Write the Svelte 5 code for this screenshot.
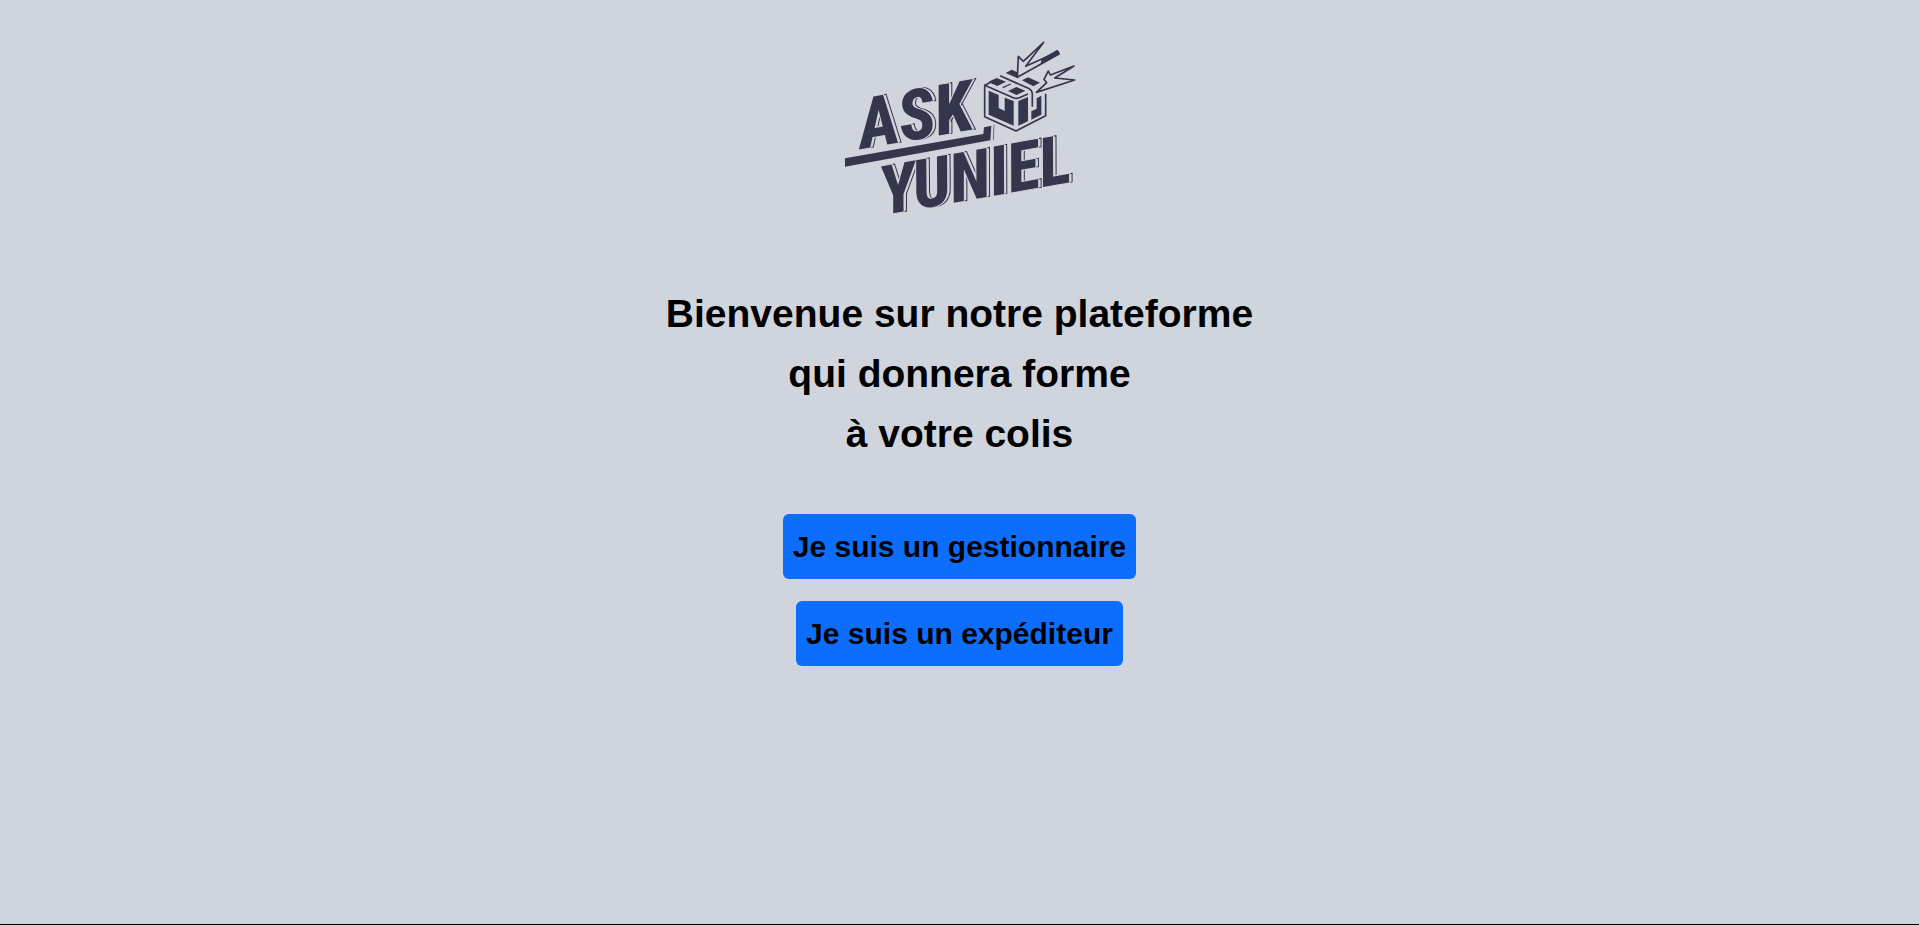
<script>
  const ink = '#34364b';
  const words = [
    { text: 'ASK', x: 112, y: 124, size: 70 },
    { text: 'YUNIEL', x: 134, y: 190, size: 68 }
  ];
  const title = ['Bienvenue sur notre plateforme', 'qui donnera forme', 'à votre colis'];
  const roles = ['Je suis un gestionnaire', 'Je suis un expéditeur'];
</script>

<main>
  <svg class="logo" viewBox="0 0 420 240" role="img" aria-label="Ask Yuniel">
    {#each words as w}
      <g transform="translate({w.x} {w.y}) rotate(-10)" font-size={w.size}>
        <text class="echo" x="3">{w.text}</text>
        <text class="word">{w.text}</text>
      </g>
    {/each}
    <g transform="translate(70 -5) scale(.33333)" fill={ink}>
      <path d="M75 415 490 342 492 322 514 317 511 361 75 440Z" />
      <path d="M522 315 520 360" stroke={ink} stroke-width="2" />
    </g>
    <g transform="translate(220 5) scale(.33333)" fill={ink} stroke-linejoin="round">
      <g fill="none" stroke={ink} stroke-width="5">
        <path d="M60 158 44 166V260L138 303 227 257V191" />
        <path d="M44 166 130 203Q139 207 148 203L174 192" />
        <path d="M90 137 175 175Q187 180 187 194V230" />
      </g>
      <path d="M56 182 86 195V234L104 243V203L131 213V287L56 254Z" />
      <path d="M145 213 174 201V274L145 287Z" />
      <path d="M214 197V254L184 269V244L200 236V205Z" />
      <path d="M54 156 80 144 108 155 82 168Z" />
      <path d="M114 183 139 171 166 182 140 195Z" />
      <path d="M107 129 125 119 142 127 143 145Z" />
      <path d="M156 151 174 142 210 158 190 169Z" />
      <path d="M98 173 122 162" stroke={ink} stroke-width="4" />
      <g fill="#d0d4dc" stroke={ink} stroke-width="5">
        <path d="M142 142 145 79 160 94 221 37 167 109 264 65 267 72Z" />
        <path d="M199 187 230 158 222 148 235 123 241 135 312 108 254 144 314 150Z" />
      </g>
      <path d="M215 86 262 59 270 72 212 102Z" />
    </g>
  </svg>

  <h1>
    {#each title as line}<span>{line}</span>{/each}
  </h1>

  <div class="actions">
    {#each roles as role}<button type="button">{role}</button>{/each}
  </div>
</main>

<style>
  :global(body) {
    margin: 0;
    background: #d0d4dc;
  }
  main {
    box-sizing: border-box;
    min-height: 100vh;
    padding: 25px 16px;
    border-bottom: 1px solid #000;
    display: flex;
    flex-direction: column;
    align-items: center;
    font-family: 'Liberation Sans', Arial, sans-serif;
    color: #000;
  }
  .logo {
    width: 420px;
    max-width: 100%;
  }
  .logo text {
    font-family: 'Roboto Condensed', 'Liberation Sans Narrow', 'Roboto', sans-serif;
    font-weight: 800;
    font-style: italic;
  }
  .echo {
    fill: #d0d4dc;
    stroke: #34364b;
    stroke-width: 1px;
  }
  .word {
    fill: #34364b;
    stroke: #d0d4dc;
    stroke-width: 2px;
    paint-order: stroke;
  }
  h1 {
    margin: 19px 0 0;
    font-size: 39px;
    line-height: 60px;
    font-weight: 700;
    text-align: center;
  }
  h1 span {
    display: block;
  }
  .actions {
    display: flex;
    flex-direction: column;
    align-items: center;
    gap: 22px;
    margin-top: 50px;
  }
  button {
    padding: 10px;
    border: 0;
    border-radius: 6px;
    background: #0d6efd;
    color: #000;
    font: 700 30px/45px 'Liberation Sans', Arial, sans-serif;
    cursor: pointer;
  }
</style>
